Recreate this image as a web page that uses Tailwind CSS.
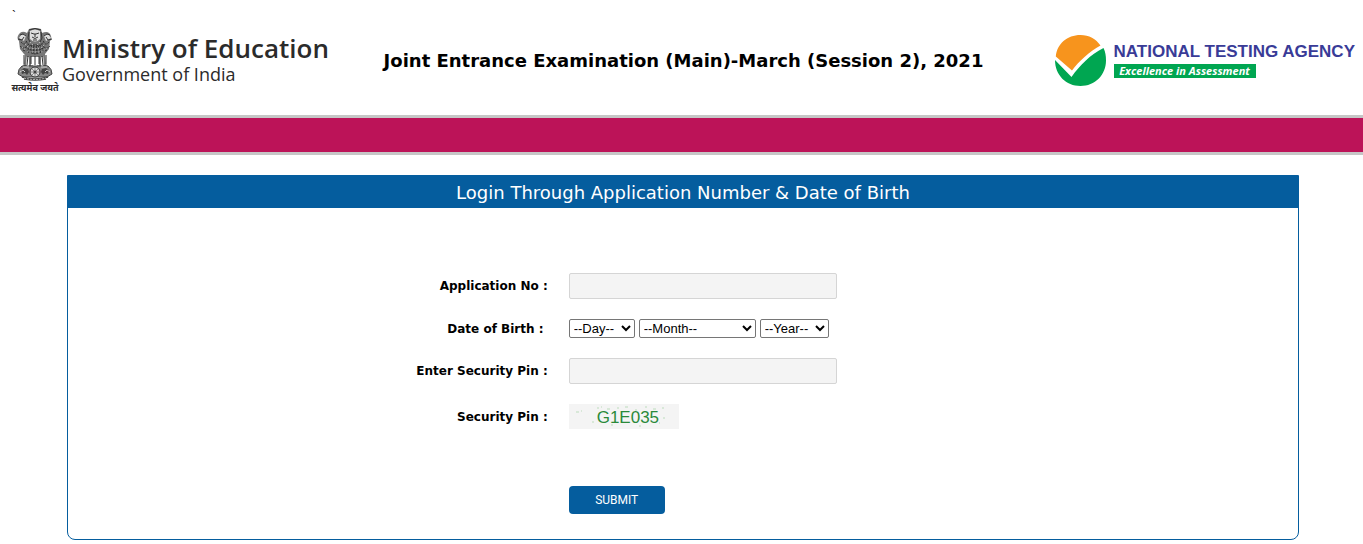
<!DOCTYPE html>
<html lang="en">
<head>
  <meta charset="UTF-8">
  <meta name="viewport" content="width=device-width, initial-scale=1.0">
  <title>Joint Entrance Examination (Main)</title>
  <script src="https://cdn.jsdelivr.net/npm/@tailwindcss/browser@4"></script>
</head>
<body class="bg-white text-black font-['DejaVu_Sans',Verdana,sans-serif]">
  <header>
    <p class="h-6 pl-3 pt-2 text-xs leading-4 font-['Liberation_Sans',Arial,sans-serif]">`</p>
    <div class="grid grid-cols-[1fr_auto_1fr] items-start h-[91px] pl-3 pr-2">
      <div class="flex font-['Open_Sans','Noto_Sans',sans-serif] text-[#2b2b2b]">
        <div class="flex flex-col items-center w-[46px] pt-1">
          <!-- Lion capital -->
          <svg class="w-[38px] h-[53px]" viewBox="0 0 38 53" fill="none">
            <path fill="#777" d="M13 1Q19-1 25 1l1 4q7-3 9 3 1 4-1 5l-1 8-4 5-2 3H11l-3-3-4-5-1-8q-3-3 0-7 3-4 8-1z"/>
            <path fill="#ddd" d="M14 3q5-3 10 0v8q-5 5-10 0zM5 7q3-2 5 1l-2 5-5-3zM33 7q-3-2-5 1l2 5 5-3z"/>
            <path stroke="#333" d="M13 2q6-3 12 0M15 5l3 1 2 0 3-1M16 9q3 3 6 0M13 4l-1 6 2 4M25 4l1 6-2 4M4 7l3-1 3 2M2 11l4 1 2-3M34 7l-3-1-3 2M36 11l-4 1-2-3M19 6v3M17 12h4"/>
            <path stroke="#333" stroke-dasharray="2 1" d="M5 14q4 5 6-2M4 18q5 5 9-3M7 22q5 3 7-5M13 25l3-8M17 26l1-10M21 26l-1-10M25 25l-3-8M31 22q-5 3-7-5M34 18q-5 5-9-3M33 14q-4 5-6-2M10 13l3 4 6 1 6-1 3-4M9 19l5 3h10l5-3M12 24l7 2 7-2"/>
            <path stroke="#ccc" stroke-dasharray="1 2" d="M9 16l4 4 6 1 6-1 4-4M6 19l6 5h14l6-5M14 14l3 3M24 14l-3 3"/>
            <path stroke="#777" stroke-width="2" d="M10 26l-1 11M14 27v11M24 27v11M28 26l1 11"/>
            <path stroke="#333" d="M8 27v9M12 28l-1 9M15 28v8M19 28v9M23 28v8M26 28l1 9M30 27v9M7 37l4 1M13 38h4M21 38h4M27 38l4-1"/>
            <path fill="#888" stroke="#444" d="M6 38h26q4 3 4 8l-5 3H7l-5-3q0-5 4-8z"/>
            <path fill="#444" d="M5 42l3-2 4 1 1 3-2 3-2-2-3 1zM33 42l-3-2-4 1-1 3 2 3 2-2 3 1z"/>
            <path stroke="#ccc" d="M4 44l3-2 2 2M34 44l-3-2-2 2M7 39h6M25 39h6"/>
            <circle cx="19" cy="44" r="5" fill="#ddd" stroke="#333"/>
            <path stroke="#666" stroke-width=".7" d="M19 39v10M14 44h10M15.500 40.500l7 7M22.500 40.500l-7 7"/>
            <circle cx="19" cy="44" r="1.500" fill="#444"/>
            <path stroke="#444" stroke-width="1.500" d="M6 49q13 4 26 0M8 51q11 2 22 0"/>
            <path stroke="#bbb" stroke-dasharray="2 1" d="M8 50q11 3 22 0"/>
          </svg>
          <p class="pt-px text-[9px] leading-3 font-bold whitespace-nowrap" lang="hi">सत्यमेव जयते</p>
        </div>
        <div class="pl-1 pt-2">
          <p class="text-[26px] leading-8 font-semibold">Ministry of Education</p>
          <p class="text-lg leading-5">Government of India</p>
        </div>
      </div>
      <h1 class="pt-6 text-lg leading-[26px] font-bold">Joint Entrance Examination (Main)-March (Session 2), 2021</h1>
      <div class="flex justify-end gap-2 pt-[11px] font-['Liberation_Sans',Arial,sans-serif] font-bold whitespace-nowrap">
        <svg class="w-[51px] h-[51px]" viewBox="0 0 51 51">
          <path fill="#f7941d" d="M.800 21.500C2 9 12 0 25.500 0 34 0 41 4 45.500 10.500 34 17 24 26 17 35.500z"/>
          <path fill="#00a651" d="M0 25L16.500 42C25 30 35 20 48.500 13Q51 18 51 25.500C51 40 40 51 25.500 51S0 40 0 25z"/>
        </svg>
        <div class="pt-[5px]">
          <p class="text-[17px] leading-6 text-[#393b97]">NATIONAL TESTING AGENCY</p>
          <p class="w-[142px] h-[14px] bg-[#00a651] text-center text-white text-[11px] leading-[14px] italic font-['Open_Sans',sans-serif]">Excellence in Assessment</p>
        </div>
      </div>
    </div>
  </header>

  <div class="h-10 bg-[#bc1358] border-y-3 border-[#c6c6c6]"></div>

  <main class="mt-5 ml-[67px] mr-16 border border-[#055d9e] rounded-b-lg">
    <h2 class="h-8 bg-[#055d9e] text-white text-center text-lg leading-[34px]">Login Through Application Number &amp; Date of Birth</h2>
    <form class="grid grid-cols-[39%_1fr] gap-x-[21px] gap-y-5 items-center pt-[65px] pb-[25px]">
      <label for="appno" class="text-right text-xs font-bold">Application No :</label>
      <input id="appno" type="text" class="w-[268px] h-[26px] px-2 text-sm bg-[#f4f4f4] border border-[#d5d5d5] rounded-xs">

      <label for="day" class="text-right text-xs font-bold">Date of Birth :&nbsp;</label>
      <div class="flex gap-1 font-['Liberation_Sans',Arial,sans-serif] text-[13px]">
        <select id="day" class="w-[66px] h-[19px] bg-white border border-[#767676] rounded-xs">
          <option>--Day--</option>
        </select>
        <select aria-label="Month" class="w-[117px] h-[19px] bg-white border border-[#767676] rounded-xs">
          <option>--Month--</option>
        </select>
        <select aria-label="Year" class="w-[69px] h-[19px] bg-white border border-[#767676] rounded-xs">
          <option>--Year--</option>
        </select>
      </div>

      <label for="pin" class="text-right text-xs font-bold">Enter Security Pin :</label>
      <input id="pin" type="text" class="w-[268px] h-[26px] px-2 text-sm bg-[#f4f4f4] border border-[#d5d5d5] rounded-xs">

      <p class="text-right text-xs font-bold">Security Pin :</p>
      <div class="relative w-[110px] h-[25px] pl-7 bg-[#f4f4f4] text-[#2a8a3a] text-[17px] leading-7 font-['Liberation_Sans',Arial,sans-serif]">
        <svg class="absolute inset-0" width="110" height="25" fill="none" stroke="#bcdcbc">
          <path d="M7 8h3M12 7h1M28 4h2M32 3h1M38 5h3M48 4h2M56 3h3M66 6h2M76 3h2M84 5h3M93 4h2M94 14h2M23 18h2M42 21h2M70 22h2M90 19h1"/>
        </svg>
        G1E035
      </div>

      <button type="submit" class="col-start-2 w-24 h-7 mt-[37px] bg-[#055d9e] rounded-sm text-white text-xs font-[Roboto,sans-serif]">SUBMIT</button>
    </form>
  </main>
</body>
</html>
